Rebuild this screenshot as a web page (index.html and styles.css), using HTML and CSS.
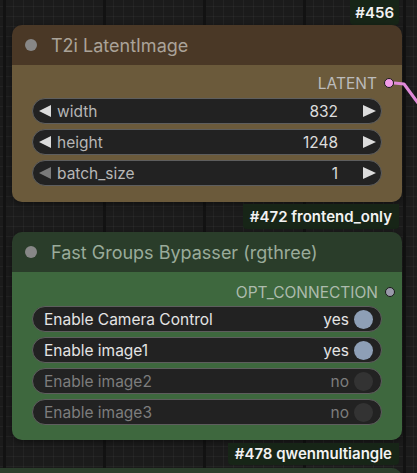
FILE: index.html
```html
<!DOCTYPE html>
<html>
<head>
<meta charset="utf-8">
<link rel="stylesheet" href="styles.css">
</head>
<body>
<div class="canvas">
  <div class="stack">
    <div class="badge-row"><span class="badge">#456</span></div>
    <div class="node node-brown">
      <div class="title"><span class="tdot"></span><span class="ttext">T2i LatentImage</span></div>
      <div class="body">
        <div class="output"><span class="olabel">LATENT</span><span class="odot pink"></span></div>
        <div class="num">
          <span class="arr left"></span><span class="nlabel">width</span><span class="nval">832</span><span class="arr right"></span>
        </div>
        <div class="num">
          <span class="arr left"></span><span class="nlabel">height</span><span class="nval">1248</span><span class="arr right"></span>
        </div>
        <div class="num">
          <span class="arr left dim"></span><span class="nlabel">batch_size</span><span class="nval">1</span><span class="arr right"></span>
        </div>
      </div>
    </div>
    <div class="badge-row gap-b"><span class="badge">#472 frontend_only</span></div>
    <div class="node node-green">
      <div class="title"><span class="tdot"></span><span class="ttext">Fast Groups Bypasser (rgthree)</span></div>
      <div class="body">
        <div class="output"><span class="olabel">OPT_CONNECTION</span><span class="odot grey"></span></div>
        <div class="toggle on"><span class="tlabel">Enable Camera Control</span><span class="tval">yes</span><span class="knob"></span></div>
        <div class="toggle on"><span class="tlabel">Enable image1</span><span class="tval">yes</span><span class="knob"></span></div>
        <div class="toggle off"><span class="tlabel">Enable image2</span><span class="tval">no</span><span class="knob"></span></div>
        <div class="toggle off"><span class="tlabel">Enable image3</span><span class="tval">no</span><span class="knob"></span></div>
      </div>
    </div>
    <div class="badge-row gap-c"><span class="badge">#478 qwenmultiangle</span></div>
  </div>
  <div class="next-node"></div>
  <svg class="wire" width="30" height="30" viewBox="0 0 30 30">
    <path d="M0 2 L10 3 L24 22" fill="none" stroke="#e08ad8" stroke-width="3" stroke-linejoin="round"/>
  </svg>
</div>
</body>
</html>
```
FILE: styles.css
```css
* { box-sizing: border-box; }
html, body { margin: 0; padding: 0; background: #1b1b1b; }
.canvas {
  position: relative;
  width: 417px;
  height: 473px;
  overflow: hidden;
  font-family: Inter, "Noto Sans", "Liberation Sans", sans-serif;
  background-color: #1b1b1b;
  background-image:
    linear-gradient(90deg, #121212 0 3px, transparent 3px),
    linear-gradient(90deg, rgba(255,255,255,0.035) 0 1px, transparent 1px),
    linear-gradient(0deg, rgba(255,255,255,0.035) 0 1px, transparent 1px);
  background-size: 100px 100px, 10px 10px, 10px 10px;
  background-position: 403px 0, 3px 0, 0 7px;
}
.stack {
  display: flex;
  flex-direction: column;
  width: 402px;
  padding-left: 12px;
}
.badge-row {
  display: flex;
  justify-content: flex-end;
  height: 25px;
  padding-right: 3px;
}
.gap-b { margin-top: 2px; margin-bottom: 3px; }
.gap-c { margin-top: 3px; height: 22px; }
.badge {
  background: #172517;
  color: #f2f2f2;
  font-weight: 600;
  font-size: 15px;
  line-height: 25px;
  padding: 0 7px;
  border-radius: 0 0 4px 4px;
}
.badge-row:first-child .badge { padding: 0 5px; }
.gap-c .badge { line-height: 22px; }
.node {
  width: 390px;
  border-radius: 10px;
  overflow: hidden;
  box-shadow: 0 2px 6px rgba(0,0,0,0.4);
}
.title {
  height: 40px;
  display: flex;
  align-items: center;
  padding-left: 13px;
  gap: 14px;
  font-size: 18px;
}
.tdot {
  width: 12px;
  height: 12px;
  border-radius: 50%;
  background: #878787;
}
.node-brown .title { background: #4a3826; }
.node-brown .ttext { color: #aaa399; }
.node-brown .body { background: #6b5a3b; }
.node-green .title { background: #2a3d2a; }
.node-green .ttext { color: #9aab9a; }
.node-green .body { background: #3e683e; }
.body {
  display: flex;
  flex-direction: column;
  gap: 5px;
  padding: 8px 20px 16px 20px;
}
.node-green .body { padding-top: 10px; padding-bottom: 15px; }
.output {
  height: 20px;
  display: flex;
  align-items: center;
  justify-content: flex-end;
  gap: 7px;
  margin-right: -12px;
  margin-bottom: 0;
}
.node-green .output { margin-bottom: -1px; margin-right: -13px; }
.olabel {
  font-size: 15.5px;
  color: #bcbcbc;
}
.node-green .olabel { color: #adbbad; }
.odot {
  width: 10px;
  height: 10px;
  border-radius: 50%;
  border: 1.5px solid #1a1a1a;
}
.pink { background: #f29ce8; }
.grey { background: #9a9aaa; }
.num, .toggle {
  height: 26px;
  border-radius: 13px;
  background: #222;
  border: 1px solid #5e5e5e;
  display: flex;
  align-items: center;
  font-size: 15.5px;
}
.num { padding: 0 5px 0 6px; }
.arr {
  width: 0;
  height: 0;
  border-top: 6.5px solid transparent;
  border-bottom: 6.5px solid transparent;
}
.arr.left { border-right: 12px solid #dcdcdc; }
.arr.left.dim { border-right-color: #7a7a7a; }
.arr.right { border-left: 13px solid #dcdcdc; }
.nlabel { color: #b6b6b6; margin-left: 6px; flex: 1; }
.nval { color: #dcdcdc; margin-right: 25px; }
.toggle { padding: 0 8px 0 11px; }
.tlabel { flex: 1; }
.tval { margin-right: 5px; }
.knob {
  width: 19px;
  height: 19px;
  border-radius: 50%;
}
.toggle.on .tlabel, .toggle.on .tval { color: #e4e4e4; }
.toggle.on .knob { background: #8e9fb6; }
.toggle.off .tlabel, .toggle.off .tval { color: #7d7d7d; }
.toggle.off .knob { background: #333; }
.next-node {
  position: absolute;
  left: 0;
  top: 468px;
  width: 402px;
  height: 12px;
  background: #2b3e2b;
  border-radius: 0 10px 0 0;
}
.wire {
  position: absolute;
  left: 394px;
  top: 81px;
}
```
